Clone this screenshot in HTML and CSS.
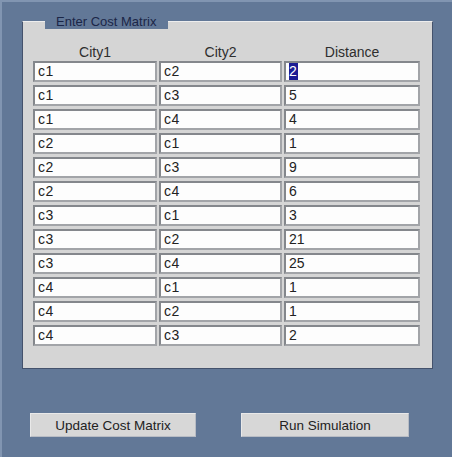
FILE: index.html
```html
<!DOCTYPE html>
<html lang="en">
<head>
  <meta charset="UTF-8" />
  <title>Cost Matrix</title>
  <link rel="stylesheet" href="styles.css">
</head>
<body>
  <div class="window">
    <fieldset class="matrix">
      <legend>Enter Cost Matrix</legend>

      <div class="grid heads">
        <div class="head">City1</div>
        <div class="head">City2</div>
        <div class="head">Distance</div>
      </div>

      <div class="grid rows">
        <div class="field">c1</div><div class="field">c2</div><div class="field"><span class="sel">2</span></div>
        <div class="field">c1</div><div class="field">c3</div><div class="field num">5</div>
        <div class="field">c1</div><div class="field">c4</div><div class="field num">4</div>
        <div class="field">c2</div><div class="field">c1</div><div class="field num">1</div>
        <div class="field">c2</div><div class="field">c3</div><div class="field num">9</div>
        <div class="field">c2</div><div class="field">c4</div><div class="field num">6</div>
        <div class="field">c3</div><div class="field">c1</div><div class="field num">3</div>
        <div class="field">c3</div><div class="field">c2</div><div class="field num">21</div>
        <div class="field">c3</div><div class="field">c4</div><div class="field num">25</div>
        <div class="field">c4</div><div class="field">c1</div><div class="field num">1</div>
        <div class="field">c4</div><div class="field">c2</div><div class="field num">1</div>
        <div class="field">c4</div><div class="field">c3</div><div class="field num">2</div>
      </div>
    </fieldset>

    <div class="buttons">
      <button class="btn update">Update Cost Matrix</button>
      <button class="btn run">Run Simulation</button>
    </div>
  </div>
</body>
</html>
```

FILE: styles.css
```css
body {
  margin: 0;
  background-color: #fff;
  font-family: 'Liberation Sans', Arial, sans-serif;
}

.window {
  box-sizing: border-box;
  width: 452px;
  height: 457px;
  padding-top: 12px;
  background-color: #627897;
  border-top: 2px solid #8195b1;
  border-left: 2px solid #8195b1;
}

.matrix {
  box-sizing: border-box;
  width: 411px;
  margin: 0 0 0 20px;
  padding: 0 12px 22px 10px;
  background-color: #d5d5d5;
  border: 1px solid #44526c;
  border-top-color: #eeeeee;
}

.matrix legend {
  height: 15px;
  line-height: 15px;
  margin-left: 12px;
  padding: 0 12px 0 11px;
  background-color: #627897;
  color: #1b2647;
  font-size: 13px;
}

.grid {
  display: grid;
  grid-template-columns: 124px 123px 136px;
  column-gap: 2px;
}

.heads {
  margin-top: 15px;
  margin-bottom: 1px;
}

.head {
  text-align: center;
  font-size: 14px;
  line-height: 16px;
  color: #2e2e2e;
}

.rows {
  row-gap: 3px;
}

.field {
  box-sizing: border-box;
  height: 21px;
  padding-left: 3px;
  background-color: #fdfdfd;
  border: 2px solid #a2a4a8;
  border-top-color: #84878c;
  border-left-color: #84878c;
  font-size: 14px;
  line-height: 17px;
  letter-spacing: 0.6px;
  color: #222;
}

.num {
  letter-spacing: 0;
}

.sel {
  display: inline-block;
  background-color: #1c1c94;
  color: #fff;
  padding-right: 1px;
}

.buttons {
  display: flex;
  margin-top: 44px;
  padding-left: 28px;
  gap: 45px;
}

.btn {
  height: 24px;
  padding: 0;
  background-color: #d7d7d7;
  border: 1px solid #e9e9e9;
  border-right-color: #b8bcc4;
  border-bottom-color: #b8bcc4;
  font-family: 'Liberation Sans', Arial, sans-serif;
  font-size: 13.5px;
  color: #222;
}

.update {
  width: 166px;
}

.run {
  width: 168px;
}
```
